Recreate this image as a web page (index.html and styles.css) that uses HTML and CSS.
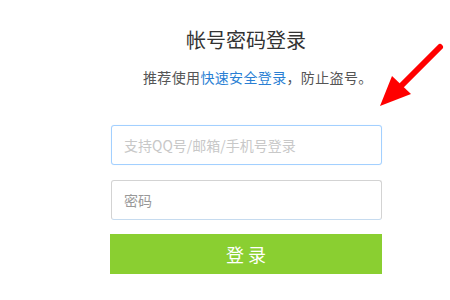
FILE: index.html
```html
<!DOCTYPE html>
<html lang="zh-CN">

<head>
    <meta charset="UTF-8">
    <meta name="viewport" content="width=device-width, initial-scale=1.0">
    <title>帐号密码登录</title>

    <link rel="stylesheet" href="styles.css">
</head>

<body>

    <main class="login">
        <h1>帐号密码登录</h1>
        <p class="tip">推荐使用<a href="#">快速安全登录</a>，防止盗号。</p>

        <div class="form">
            <div class="form-input">
                <input type="text" class="active" placeholder="支持QQ号/邮箱/手机号登录">
            </div>
            <div class="form-input">
                <input type="password" placeholder="密码">
            </div>
            <button class="loginBtn">登 录</button>
        </div>
    </main>

    <!-- Pointer arrow -->
    <svg class="arrow" width="80" height="80" viewBox="0 0 80 80">
        <line x1="70" y1="9" x2="32" y2="47" stroke="#ff0000" stroke-width="6" stroke-linecap="round" />
        <polygon points="10,68 22,38 41,56" fill="#ff0000" />
    </svg>

</body>

</html>
```

FILE: styles.css
```css
* {
    box-sizing: border-box;
    padding: 0;
    margin: 0;
}

body {
    background: #fff;
    font-family: "Noto Sans CJK SC", "Liberation Sans", sans-serif;
    color: #333;
}

.login {
    width: 272px;
    margin-left: 110px;
    padding-top: 25px;
}

h1 {
    font-size: 20px;
    font-weight: normal;
    line-height: 30px;
    text-align: center;
    color: #333;
}

.tip {
    margin-top: 11px;
    padding-left: 33px;
    font-size: 14px;
    line-height: 22px;
    letter-spacing: 0.35px;
    color: #555;
    white-space: nowrap;
    text-spacing-trim: space-all;
}

.tip a {
    color: #2a7fd4;
    text-decoration: none;
}

/* Form Styling */
.form {
    margin-top: 37px;
}

.form .form-input input {
    display: block;
    width: 271px;
    margin-left: 1px;
    height: 40px;
    padding: 0 12px;
    border: 1px solid #d3d3d3;
    border-bottom-color: #c6dbef;
    border-radius: 3px;
    font-family: inherit;
    font-size: 14px;
    color: #333;
    outline: none;
    margin-bottom: 15px;
}

.form .form-input input.active {
    border-color: #a3d0ff;
    box-shadow: 0 0 1px #cfe6ff;
}

.form .form-input input::placeholder {
    color: #c8c8c8;
}

.form .form-input input[type="password"]::placeholder {
    color: #999;
}

.loginBtn {
    display: block;
    width: 272px;
    height: 40px;
    margin-top: -1px;
    border: none;
    background: #8acf31;
    color: #fff;
    font-family: inherit;
    font-size: 18px;
    cursor: pointer;
}

.arrow {
    position: absolute;
    left: 370px;
    top: 38px;
}
```
